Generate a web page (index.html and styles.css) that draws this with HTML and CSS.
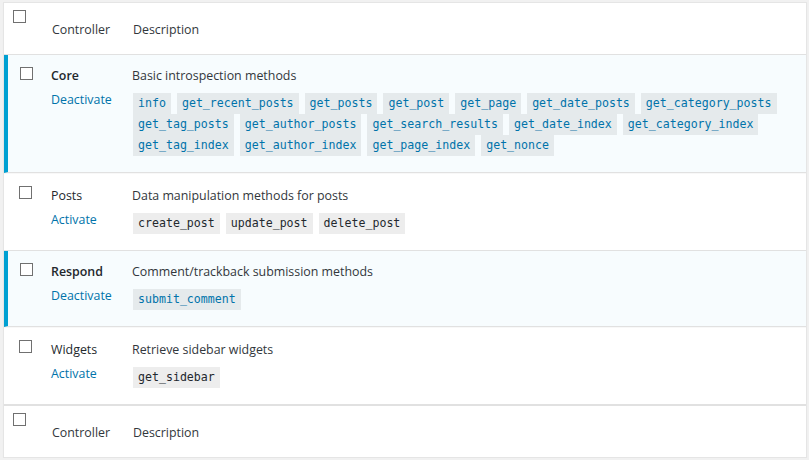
FILE: index.html
```html
<!DOCTYPE html>
<html lang="en">
<head>
<meta charset="utf-8">
<title>Controllers</title>
<link rel="stylesheet" href="styles.css">
</head>
<body>
<div class="wrap">
<table class="plugins">
  <colgroup><col class="c-cb"><col class="c-name"><col class="c-desc"></colgroup>
  <thead>
    <tr><td class="cb head-cb"><span class="box"></span></td><th class="hname">Controller</th><th class="hdesc">Description</th></tr>
  </thead>
  <tbody>
    <tr class="active">
      <th class="cb"><span class="box"></span></th>
      <td class="name"><strong>Core</strong><div class="actions"><a href="#">Deactivate</a></div></td>
      <td class="desc"><p>Basic introspection methods</p>
        <div class="methods"><code>info</code><code>get_recent_posts</code><code>get_posts</code><code>get_post</code><code>get_page</code><code>get_date_posts</code><code>get_category_posts</code><code>get_tag_posts</code><code>get_author_posts</code><code>get_search_results</code><code>get_date_index</code><code>get_category_index</code><code>get_tag_index</code><code>get_author_index</code><code>get_page_index</code><code>get_nonce</code></div>
      </td>
    </tr>
    <tr class="inactive after-active">
      <th class="cb"><span class="box"></span></th>
      <td class="name"><span class="title">Posts</span><div class="actions"><a href="#">Activate</a></div></td>
      <td class="desc"><p>Data manipulation methods for posts</p>
        <div class="methods"><code>create_post</code><code>update_post</code><code>delete_post</code></div>
      </td>
    </tr>
    <tr class="active">
      <th class="cb"><span class="box"></span></th>
      <td class="name"><strong>Respond</strong><div class="actions"><a href="#">Deactivate</a></div></td>
      <td class="desc"><p>Comment/trackback submission methods</p>
        <div class="methods"><code>submit_comment</code></div>
      </td>
    </tr>
    <tr class="inactive after-active">
      <th class="cb"><span class="box"></span></th>
      <td class="name"><span class="title">Widgets</span><div class="actions"><a href="#">Activate</a></div></td>
      <td class="desc"><p>Retrieve sidebar widgets</p>
        <div class="methods"><code>get_sidebar</code></div>
      </td>
    </tr>
  </tbody>
  <tfoot>
    <tr><td class="cb head-cb"><span class="box"></span></td><th class="hname">Controller</th><th class="hdesc">Description</th></tr>
  </tfoot>
</table>
</div>
</body>
</html>
```
FILE: styles.css
```css
* { box-sizing: border-box; }

body {
  margin: 0;
  background: #f1f1f1;
  font-family: "Open Sans", "Noto Sans", sans-serif;
  font-size: 12.4px;
  color: #32373c;
}

.wrap {
  padding: 2px 2px 0 3px;
}

.plugins {
  width: 804px;
  table-layout: fixed;
  border-collapse: separate;
  border-spacing: 0;
  background: #fff;
  border: 1px solid #e5e5e5;
  box-shadow: 0 1px 1px rgba(0, 0, 0, .04);
}

.c-cb { width: 37px; }
.c-name { width: 81px; }

thead th, thead td, tfoot th, tfoot td {
  font-weight: 400;
  text-align: left;
  line-height: 20px;
  padding: 17px 10px 14px;
  vertical-align: middle;
  color: #32373c;
}

thead th, thead td { border-bottom: 1px solid #e1e1e1; }
tfoot th, tfoot td { border-top: 1px solid #e1e1e1; }

.hname { padding-left: 11px; }
.hdesc { padding-left: 11px; }

thead .head-cb, tfoot .head-cb {
  vertical-align: top;
  padding: 7px 0 0 9px;
}

.box {
  display: block;
  width: 13px;
  height: 13px;
  border: 1px solid #707070;
  background: #fff;
}

tbody th, tbody td {
  vertical-align: top;
  text-align: left;
  line-height: 20px;
  border-bottom: 1px solid #e1e1e1;
}

tbody .cb {
  padding: 12px 0 0 15px;
}

tbody .active th, tbody .active td {
  background: #f7fcfe;
}

tbody .active .cb {
  border-left: 4px solid #00a0d2;
  padding-left: 12px;
}

tbody .after-active th, tbody .after-active td {
  border-top: 1px solid #f8f8f8;
}

.name {
  padding: 11px 10px 16px;
  color: #23282d;
}

.name strong {
  font-weight: 600;
  color: #23282d;
}

.actions {
  padding-top: 4px;
}

.actions a {
  color: #0073aa;
  text-decoration: none;
}

.desc {
  padding: 11px 10px 16px;
}

.inactive .desc, .inactive .name {
  padding-top: 12px;
  padding-bottom: 16px;
}

.desc p {
  margin: 0;
  color: #32373c;
}

.methods {
  display: flex;
  flex-wrap: wrap;
  column-gap: 6px;
  row-gap: 0;
  margin: 7px 0 0 1px;
}

.methods code {
  display: block;
  height: 21px;
  line-height: 21px;
  padding: 0 5px;
  background: rgba(0, 0, 0, .07);
  font-family: "DejaVu Sans Mono", "Liberation Mono", monospace;
  font-size: 11.6px;
  color: #23282d;
}

.active .methods code {
  color: #0073aa;
}
```
